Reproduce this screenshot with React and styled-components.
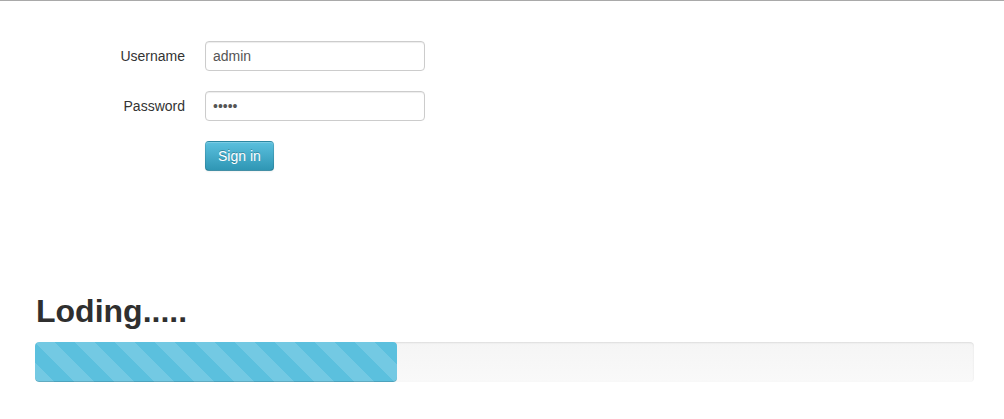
import React from "react";
import styled, { createGlobalStyle } from "styled-components";

const GlobalStyle = createGlobalStyle`
  html, body {
    margin: 0;
    padding: 0;
    background: #fff;
  }
  body {
    font-family: "Liberation Sans", Arial, Helvetica, sans-serif;
    font-size: 14px;
    line-height: 20px;
    color: #333;
  }
`;

const Page = styled.div`
  border-top: 1px solid #a9a9a9;
  min-height: 418px;
`;

const Form = styled.form`
  display: grid;
  grid-template-columns: 160px 220px;
  column-gap: 20px;
  row-gap: 20px;
  align-items: center;
  padding: 40px 0 0 25px;
  margin: 0;
`;

const Label = styled.label`
  text-align: right;
  color: #333;
`;

const Input = styled.input`
  box-sizing: border-box;
  width: 220px;
  height: 30px;
  padding: 4px 7px;
  font-family: inherit;
  font-size: 14px;
  color: #555;
  background: #fff;
  border: 1px solid #ccc;
  border-radius: 4px;
  box-shadow: inset 0 1px 1px rgba(0, 0, 0, 0.075);
  outline: none;
  &[type="password"] {
    letter-spacing: 0;
  }
`;

const Button = styled.button`
  grid-column: 2;
  justify-self: start;
  box-sizing: border-box;
  height: 30px;
  padding: 4px 12px;
  font-family: inherit;
  font-size: 14px;
  line-height: 20px;
  color: #fff;
  text-shadow: 0 -1px 0 rgba(0, 0, 0, 0.25);
  background-color: #49afcd;
  background-image: linear-gradient(to bottom, #5bc0de, #2f96b4);
  border: 1px solid rgba(0, 0, 0, 0.1);
  border-bottom-color: rgba(0, 0, 0, 0.25);
  border-radius: 4px;
  box-shadow: inset 0 1px 0 rgba(255, 255, 255, 0.2),
    0 1px 2px rgba(0, 0, 0, 0.05);
  cursor: pointer;
`;

const Loader = styled.section`
  margin: 120px 30px 0 35px;
`;

const Heading = styled.h1`
  margin: 0 0 11px 1px;
  font-size: 32px;
  line-height: 40px;
  font-weight: bold;
  color: #2f2f2f;
`;

const Track = styled.div`
  height: 40px;
  overflow: hidden;
  background-color: #f7f7f7;
  background-image: linear-gradient(to bottom, #f5f5f5, #f9f9f9);
  border-radius: 4px;
  box-shadow: inset 0 1px 2px rgba(0, 0, 0, 0.1);
`;

const Bar = styled.div`
  height: 100%;
  background-color: #5bc0de;
  background-image: linear-gradient(
    45deg,
    rgba(255, 255, 255, 0.15) 25%,
    transparent 25%,
    transparent 50%,
    rgba(255, 255, 255, 0.15) 50%,
    rgba(255, 255, 255, 0.15) 75%,
    transparent 75%,
    transparent
  );
  background-size: 40px 40px;
  border-radius: 4px;
  box-shadow: inset 0 -1px 0 rgba(0, 0, 0, 0.15);
`;

const progress = 38.55;

export default function App() {
  return (
    <Page>
      <GlobalStyle />
      <Form onSubmit={(e) => e.preventDefault()}>
        <Label htmlFor="username">Username</Label>
        <Input id="username" type="text" defaultValue="admin" />
        <Label htmlFor="password">Password</Label>
        <Input id="password" type="password" defaultValue="admin" />
        <Button type="submit">Sign in</Button>
      </Form>
      <Loader>
        <Heading>Loding.....</Heading>
        <Track>
          <Bar style={{ width: `${progress}%` }} />
        </Track>
      </Loader>
    </Page>
  );
}
